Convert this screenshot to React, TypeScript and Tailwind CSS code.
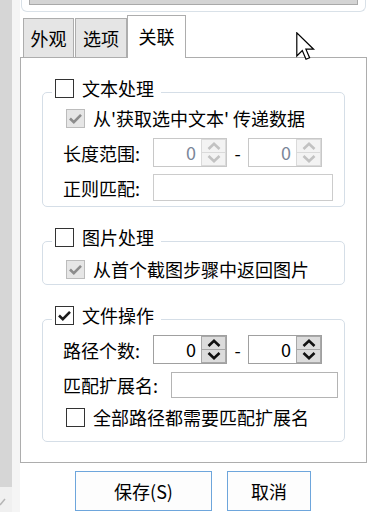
import React from "react";

const font = "font-['Noto_Sans_CJK_SC','Noto_Sans',sans-serif]";

function CheckBox({ checked = false, disabled = false }: { checked?: boolean; disabled?: boolean }) {
  const box = disabled
    ? "border-[#bcbcbc] bg-[#e6e6e6]"
    : "border-[#333333] bg-white";
  return (
    <div className={`flex h-[19px] w-[19px] shrink-0 items-center justify-center border ${box}`}>
      {checked && (
        <svg width="17" height="17" viewBox="0 0 17 17">
          <path
            d="M3 8.5 L6.8 12.2 L14 4.8"
            fill="none"
            stroke={disabled ? "#8c8c8c" : "#1a1a1a"}
            strokeWidth="2.6"
          />
        </svg>
      )}
    </div>
  );
}

function Arrow({ up, color }: { up: boolean; color: string }) {
  return (
    <svg width="14" height="8" viewBox="0 0 14 8">
      <path
        d={up ? "M1.5 7 L7 1.8 L12.5 7" : "M1.5 1 L7 6.2 L12.5 1"}
        fill="none"
        stroke={color}
        strokeWidth="2.6"
      />
    </svg>
  );
}

function SpinBox({ enabled = false }: { enabled?: boolean }) {
  const half = enabled
    ? "border border-[#a8a8a8] bg-[#dcdcdc]"
    : "border border-[#dadada] bg-[#f3f3f3]";
  const arrow = enabled ? "#111111" : "#c2c2c2";
  return (
    <div
      className={`flex h-[29px] w-[74px] shrink-0 border ${
        enabled ? "border-[#a0a0a0]" : "border-[#c8c8c8]"
      } bg-white`}
    >
      <div
        className={`flex flex-1 items-center justify-end pr-[5px] text-[18px] leading-[27px] ${
          enabled ? "text-black" : "text-[#7b8699]"
        }`}
      >
        0
      </div>
      <div className="flex w-[25px] flex-col">
        <div className={`flex h-[14px] items-center justify-center ${half}`}>
          <Arrow up color={arrow} />
        </div>
        <div className={`-mt-px flex h-[14px] items-center justify-center ${half}`}>
          <Arrow up={false} color={arrow} />
        </div>
      </div>
    </div>
  );
}

function TextBox({ width, height, dark = false }: { width: string; height: string; dark?: boolean }) {
  return (
    <div
      className={`${width} ${height} shrink-0 border bg-white ${
        dark ? "border-[#b4b4b4]" : "border-[#cccccc]"
      }`}
    />
  );
}

function GroupHeader({ checked, label }: { checked: boolean; label: string }) {
  return (
    <div className="relative z-10 ml-[10px] flex h-[19px] w-fit items-center gap-[8px] bg-white pl-[3px] pr-[7px]">
      <CheckBox checked={checked} />
      <span className="leading-[19px]">{label}</span>
    </div>
  );
}

export default function App() {
  return (
    <div className={`relative flex h-[517px] w-[371px] overflow-hidden bg-white text-[18px] text-black ${font}`}>
      {/* left edge of the parent window */}
      <div className="flex w-[12px] flex-col">
        <div className="h-[487px] bg-[#d6d6d6]" />
        <div className="flex h-[25px] items-start bg-[#f0f0f0] pt-[9px]">
          <svg width="6" height="10" viewBox="0 0 6 10">
            <path d="M0 9 L5 3" stroke="#b5b5b5" strokeWidth="1.5" />
          </svg>
        </div>
      </div>
      <div className="h-[512px] w-[8px] bg-[#f5f5f5]" />

      <div className="flex w-[351px] flex-col">
        {/* bottom of the group above */}
        <div className="ml-[1px] h-[12px] w-[345px] rounded-b-[6px] border-x border-b border-[#d9e1e8] px-[7px]">
          <div className="h-[5px] border-x border-b border-[#a9a9a9] bg-[#d4d4d4]" />
        </div>

        {/* tabs */}
        <div className="relative z-10 ml-[3px] mt-[3px] flex h-[42px] items-end">
          <div className="flex h-[39px] w-[51px] items-center justify-center border border-b-0 border-[#adadad] bg-[#e5e5e5] leading-[20px]">
            外观
          </div>
          <div className="ml-px flex h-[39px] w-[52px] items-center justify-center border border-b-0 border-[#adadad] bg-[#e5e5e5] leading-[20px]">
            选项
          </div>
          <div className="-mb-px flex h-[43px] w-[59px] items-center justify-center border border-b-0 border-[#adadad] bg-white pb-[2px] leading-[20px]">
            关联
          </div>
        </div>

        {/* tab page */}
        <div className="flex h-[406px] w-[347px] flex-col border border-[#adadad] bg-white">
          {/* 文本处理 */}
          <div className="ml-[21px] mt-[21px] w-[303px]">
            <GroupHeader checked={false} label="文本处理" />
            <div className="-mt-[6px] flex flex-col rounded-[5px] border border-[#d5dee7] pb-[5px]">
              <div className="mt-[13px] flex h-[24px] items-center gap-[8px] pl-[23px]">
                <CheckBox checked disabled />
                <span className="leading-[24px]">从'获取选中文本' 传递数据</span>
              </div>
              <div className="mt-[8px] flex h-[29px] items-center pl-[20px]">
                <span className="w-[90px] leading-[24px]">长度范围:</span>
                <SpinBox />
                <span className="w-[21px] text-center leading-[24px]">-</span>
                <SpinBox />
              </div>
              <div className="mt-[7px] flex h-[27px] items-center pl-[20px]">
                <span className="w-[90px] leading-[24px]">正则匹配:</span>
                <TextBox width="w-[180px]" height="h-[27px]" />
              </div>
            </div>
          </div>

          {/* 图片处理 */}
          <div className="ml-[21px] mt-[21px] w-[303px]">
            <GroupHeader checked={false} label="图片处理" />
            <div className="-mt-[6px] flex flex-col rounded-[5px] border border-[#d5dee7] pb-[3px]">
              <div className="mt-[15px] flex h-[24px] items-center gap-[8px] pl-[23px]">
                <CheckBox checked disabled />
                <span className="leading-[24px]">从首个截图步骤中返回图片</span>
              </div>
            </div>
          </div>

          {/* 文件操作 */}
          <div className="ml-[21px] mt-[21px] w-[303px]">
            <GroupHeader checked label="文件操作" />
            <div className="-mt-[6px] flex flex-col rounded-[5px] border border-[#d5dee7] pb-[12px]">
              <div className="mt-[15px] flex h-[29px] items-center pl-[20px]">
                <span className="w-[90px] leading-[24px]">路径个数:</span>
                <SpinBox enabled />
                <span className="w-[21px] text-center leading-[24px]">-</span>
                <SpinBox enabled />
              </div>
              <div className="mt-[8px] flex h-[26px] items-center pl-[20px]">
                <span className="w-[108px] leading-[24px]">匹配扩展名:</span>
                <TextBox width="w-[167px]" height="h-[26px]" dark />
              </div>
              <div className="mt-[7px] flex h-[24px] items-center gap-[8px] pl-[23px]">
                <CheckBox />
                <span className="leading-[24px]">全部路径都需要匹配扩展名</span>
              </div>
            </div>
          </div>
        </div>

        {/* buttons */}
        <div className="ml-[55px] mt-[8px] flex gap-[15px]">
          <button className="flex h-[40px] w-[137px] items-center justify-center border border-[#6ea6dc] bg-[#fdfdfd] leading-[20px]">
            保存(S)
          </button>
          <button className="flex h-[40px] w-[84px] items-center justify-center border border-[#6ea6dc] bg-[#fdfdfd] leading-[20px]">
            取消
          </button>
        </div>
      </div>

      {/* mouse pointer */}
      <svg
        className="absolute left-[296px] top-[32px]"
        width="20"
        height="30"
        viewBox="0 0 20 30"
      >
        <path
          d="M0.8 0.8 L0.8 24 L6.3 18.6 L10 27.3 L13.6 25.8 L9.9 17.2 L17.6 17.2 Z"
          fill="#ffffff"
          stroke="#000000"
          strokeWidth="1.2"
          strokeLinejoin="miter"
        />
      </svg>
    </div>
  );
}
